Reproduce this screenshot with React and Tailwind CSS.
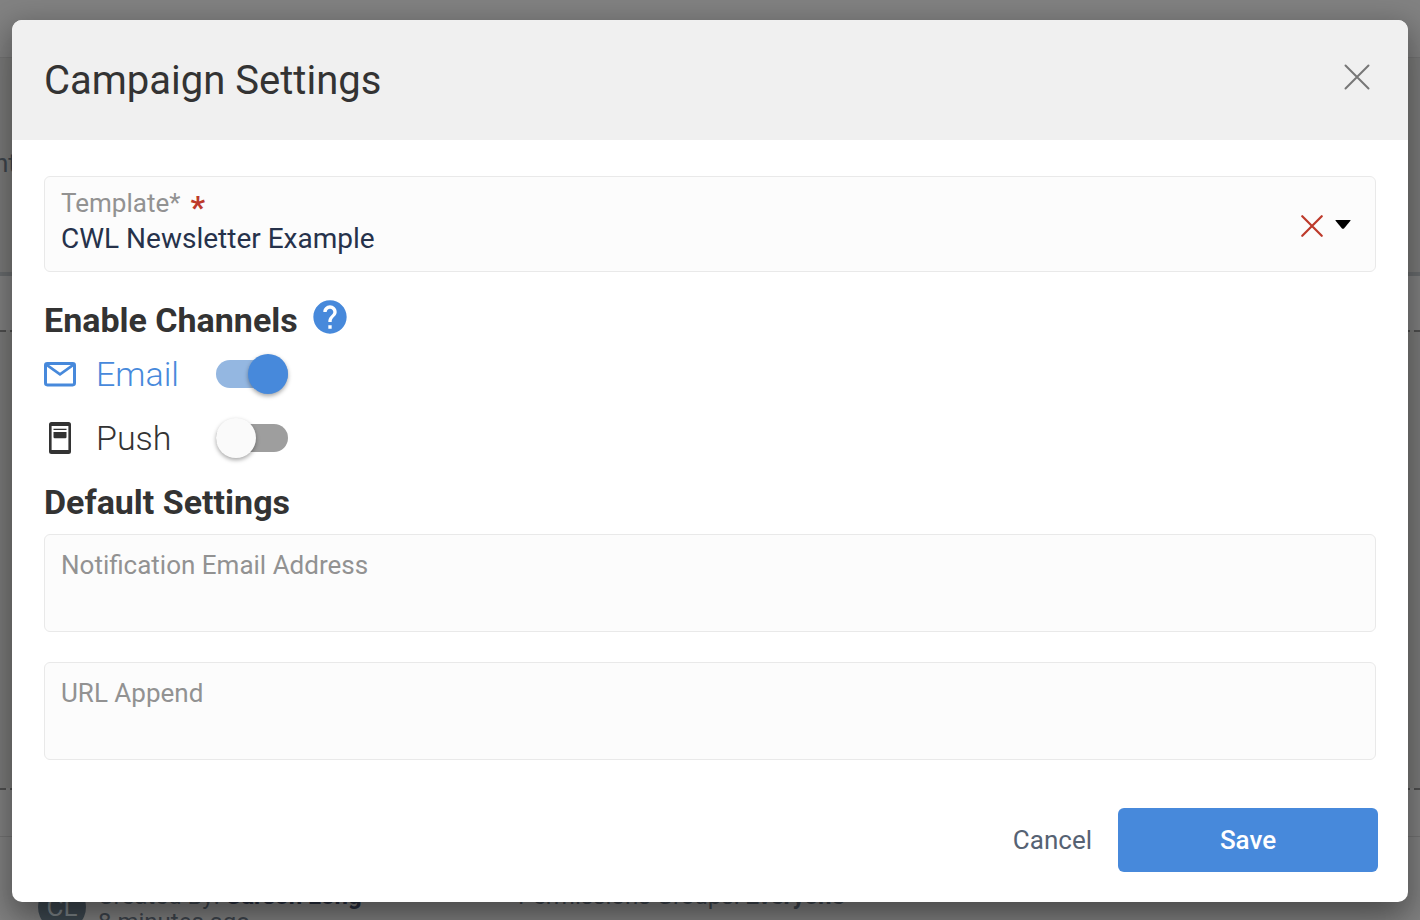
import { useState } from 'react'
import { MdHelp } from 'react-icons/md'

function MailIcon() {
  return (
    <svg viewBox="0 0 32 32" className="size-8" fill="none" stroke="currentColor" aria-hidden="true">
      <rect x="1.5" y="5.5" width="29" height="21.4" rx="1.8" strokeWidth="3" />
      <path d="M2 6.4 16 16.4 30 6.4" strokeWidth="2.6" />
    </svg>
  )
}

function PushIcon() {
  return (
    <svg viewBox="0 0 32 32" className="size-8" aria-hidden="true">
      <path
        fill="currentColor"
        fillRule="evenodd"
        d="M7.5 0h17a2.5 2.5 0 0 1 2.5 2.5v27a2.5 2.5 0 0 1-2.5 2.5h-17a2.5 2.5 0 0 1-2.5-2.5v-27a2.5 2.5 0 0 1 2.5-2.5zM7.6 4v24h16.8V4z"
      />
      <path fill="currentColor" d="M9.5 6.8h13v1.2h-13zM9.5 10h13v5a1.2 1.2 0 0 1-1.2 1.2H10.7a1.2 1.2 0 0 1-1.2-1.2z" />
    </svg>
  )
}

function CrossIcon({ className }) {
  return (
    <svg viewBox="0 0 26 26" className={className} fill="none" stroke="currentColor" strokeLinecap="round" aria-hidden="true">
      <path d="M1.5 1.5 24.5 24.5M24.5 1.5 1.5 24.5" />
    </svg>
  )
}

function Toggle({ id, checked, onChange }) {
  return (
    <input
      id={id}
      type="checkbox"
      role="switch"
      checked={checked}
      onChange={(e) => onChange(e.target.checked)}
      className="h-7 w-[72px] cursor-pointer appearance-none rounded-full bg-[#9e9e9e] before:-mt-1.5 before:block before:size-10 before:rounded-full before:bg-[#fafafa] before:shadow-[0_2px_4px_rgba(0,0,0,0.35)] before:content-[''] checked:bg-[#94b7e1] checked:before:translate-x-8 checked:before:bg-[#4789db]"
    />
  )
}

function TextField({ id, label }) {
  return (
    <div className="h-[98px] rounded-md border border-[#e9e9e9] bg-[#fcfcfc] px-4 pt-3.5">
      <label htmlFor={id} className="block text-[26px] leading-8 text-[#929292]">{label}</label>
      <input id={id} type="text" className="h-10 w-full bg-transparent text-[28px] text-[#26324b] outline-none" />
    </div>
  )
}

// Page underneath the dialog, already dimmed
function Backdrop() {
  return (
    <div className="absolute inset-0 flex flex-col overflow-hidden bg-[#828282] text-[#3f464e]">
      <div className="h-[58px] shrink-0 border-b border-[#757575]"></div>
      <div className="h-[214px] shrink-0 bg-[#7c7c7b] pt-[89px] text-[26px] leading-8">
        <span className="-ml-1.5">nt</span>
      </div>
      <div className="h-[58px] shrink-0 border-t-4 border-[#6a6d6f]"></div>
      <div className="grow border-t-2 border-dashed border-[#505050] bg-[#7c7c7b]"></div>
      <div className="h-12 shrink-0 border-t-2 border-dashed border-[#505050]"></div>
      <div className="flex h-[84px] shrink-0 items-start gap-3 border-t border-[#747474] px-[38px] pt-[46px] text-[24px] leading-[26px]">
        <div className="flex size-12 shrink-0 items-center justify-center rounded-full bg-[#3f4a52] text-[26px] text-[#80878b]">CL</div>
        <div className="w-[408px]">
          <p>Created By: <b className="text-[#2a3040]">Carson Long</b></p>
          <p>8 minutes ago</p>
        </div>
        <p>Permissions Groups: <b>Everyone</b></p>
      </div>
    </div>
  )
}

export default function App() {
  const [email, setEmail] = useState(true)
  const [push, setPush] = useState(false)
  const [template, setTemplate] = useState('CWL Newsletter Example')

  return (
    <div className="relative min-h-screen overflow-hidden px-3 pt-5 pb-[18px] font-['Roboto',sans-serif] text-[#333]">
      <Backdrop />

      <div
        role="dialog"
        aria-labelledby="dialog-title"
        className="relative overflow-hidden rounded-[10px] bg-white shadow-[0_22px_30px_-14px_rgba(0,0,0,0.2),0_10px_30px_6px_rgba(0,0,0,0.3)]"
      >
        {/* Header */}
        <header className="flex h-[120px] items-center justify-between bg-[#f0f0f0] px-8 pt-0.5">
          <h1 id="dialog-title" className="text-[40px] leading-12">Campaign Settings</h1>
          <button type="button" aria-label="Close" className="mb-2 p-1.5 text-[#777]">
            <CrossIcon className="size-[26px] stroke-2" />
          </button>
        </header>

        <form id="settings" className="px-8 pt-9" onSubmit={(e) => e.preventDefault()}>
          {/* Template */}
          <div className="flex h-24 items-center rounded-md border border-[#e9e9e9] bg-[#fcfcfc] pr-6 pl-4">
            <div className="grow pb-0.5">
              <label htmlFor="template" className="flex h-8 gap-2.5 text-[26px] leading-8 text-[#929292]">
                Template*
                <span className="pt-1 text-[32px] leading-8 font-bold text-[#bd3a2b]">*</span>
              </label>
              <select
                id="template"
                value={template}
                onChange={(e) => setTemplate(e.target.value)}
                className="block h-10 w-full appearance-none bg-transparent text-[28px] leading-10 text-[#26324b] outline-none"
              >
                <option value=""></option>
                <option>CWL Newsletter Example</option>
              </select>
            </div>
            <button type="button" aria-label="Clear template" onClick={() => setTemplate('')} className="px-3 pt-1 text-[#bd3a2b]">
              <CrossIcon className="size-[22px] stroke-[2.6]" />
            </button>
            <svg viewBox="0 0 16 9" className="w-4" aria-hidden="true">
              <path d="M1 0h14q1 0 .4.8L9 8.4q-1 .8-2 0L.6.8Q0 0 1 0z" />
            </svg>
          </div>

          {/* Channels */}
          <div className="flex items-start gap-3 pt-[25px]">
            <h2 className="pt-0.5 pb-px text-[34px] leading-[42px] font-bold">Enable Channels</h2>
            <button type="button" aria-label="Help" className="text-[#4789db]">
              <MdHelp className="size-10" />
            </button>
          </div>
          <div className="flex h-16 items-center text-[#4789db]">
            <MailIcon />
            <label htmlFor="email" className="w-[140px] pl-5 text-[34px] leading-10 font-light">Email</label>
            <Toggle id="email" checked={email} onChange={setEmail} />
          </div>
          <div className="flex h-16 items-center">
            <PushIcon />
            <label htmlFor="push" className="w-[140px] pl-5 text-[34px] leading-10 font-light">Push</label>
            <Toggle id="push" checked={push} onChange={setPush} />
          </div>

          {/* Defaults */}
          <h2 className="text-[34px] leading-16 font-bold">Default Settings</h2>
          <div className="flex flex-col gap-[30px]">
            <TextField id="notification" label="Notification Email Address" />
            <TextField id="append" label="URL Append" />
          </div>
        </form>

        {/* Actions */}
        <footer className="flex items-center justify-end gap-[26px] px-[30px] pt-12 pb-[30px] text-[26px] leading-8">
          <button type="button" className="text-[#566273]">Cancel</button>
          <button type="submit" form="settings" className="h-16 w-[260px] rounded-md bg-[#4789db] font-medium text-white">Save</button>
        </footer>
      </div>
    </div>
  )
}
